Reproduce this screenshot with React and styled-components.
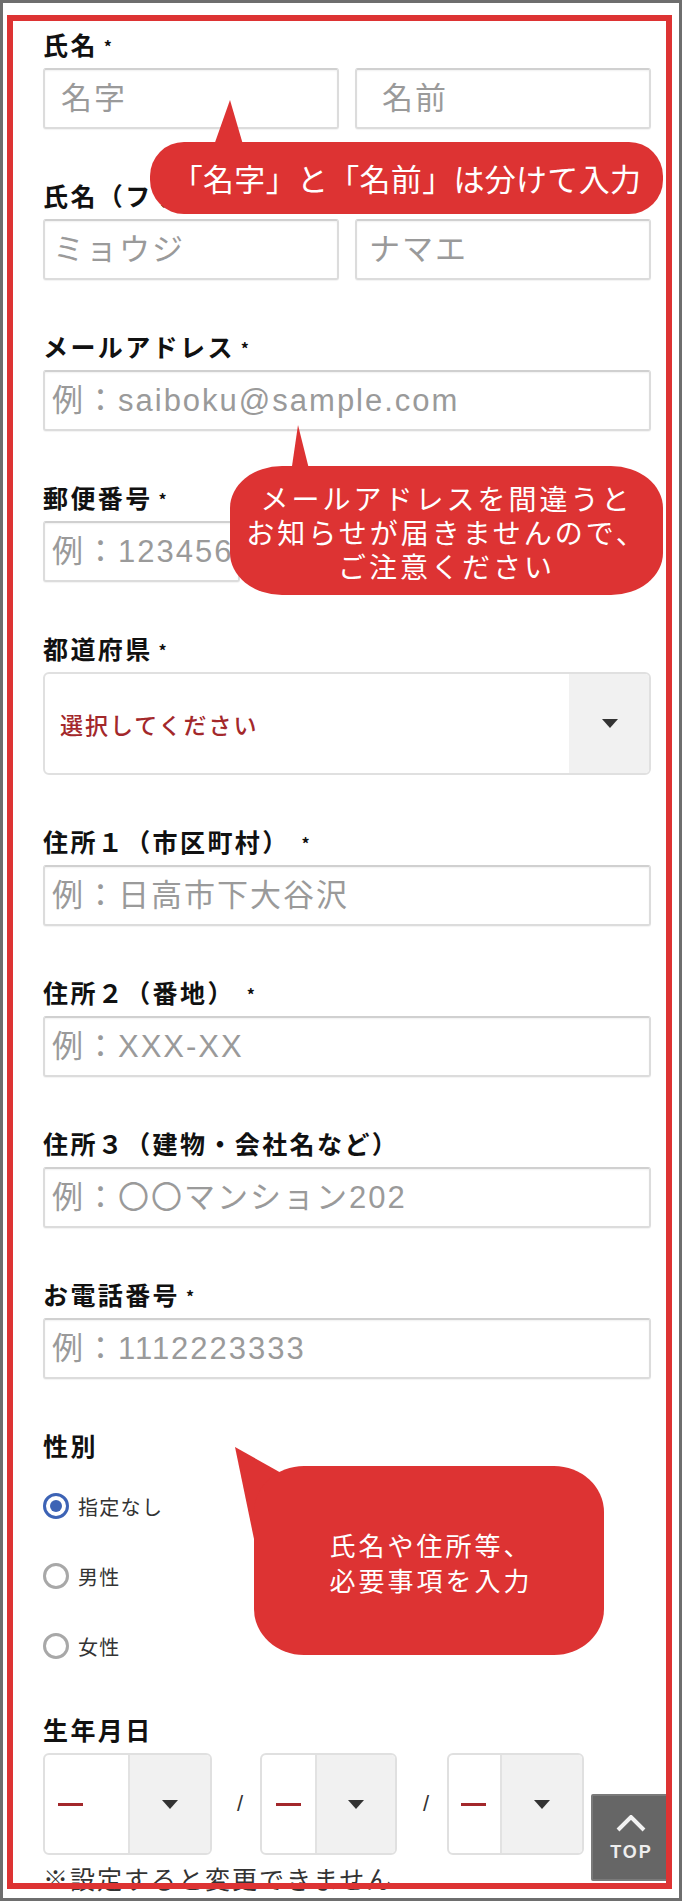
import React from "react";
import styled, { createGlobalStyle } from "styled-components";

const RED = "#dd3333";

const GlobalStyle = createGlobalStyle`
  html, body { margin: 0; padding: 0; background: #fff; }
  body { font-family: "Noto Sans CJK JP", "Liberation Sans", sans-serif; }
  *, *::before, *::after { box-sizing: border-box; }
`;

const Screen = styled.div`
  position: relative;
  width: 682px;
  height: 1901px;
  border: 3px solid #6e6e6e;
  background: #fff;
  overflow: hidden;
`;

const Form = styled.form`
  display: flex;
  flex-direction: column;
  padding: 26px 28px 0 40px;
`;

const Field = styled.div`
  display: flex;
  flex-direction: column;
  margin-bottom: ${(p) => p.$mb ?? 51}px;
`;

const Label = styled.div`
  font-family: "Noto Sans CJK JP", sans-serif;
  font-weight: 700;
  font-size: 25px;
  height: 30px;
  line-height: 30px;
  letter-spacing: 2.4px;
  color: #111;
  margin-bottom: ${(p) => p.$mb ?? 9}px;
  white-space: nowrap;
`;

const Req = styled.span`
  display: inline-block;
  font-size: 16px;
  line-height: 1;
  margin-left: ${(p) => p.$gap ?? 6}px;
  vertical-align: 2px;
`;

const Pair = styled.div`
  display: grid;
  grid-template-columns: 1fr 1fr;
  gap: 16px;
`;

const TextInput = styled.input`
  display: block;
  width: ${(p) => (p.$w ? `${p.$w}px` : "100%")};
  height: 61px;
  margin: 0;
  border: 2px solid #dcdcdc;
  border-top-color: #d0d0d0;
  border-radius: 3px;
  box-shadow: inset 0 1px 2px rgba(0, 0, 0, 0.06), 0 1px 1px rgba(0, 0, 0, 0.05);
  padding: 0 0 0 ${(p) => p.$pad ?? 7}px;
  font-family: "Liberation Sans", "Noto Sans CJK JP", sans-serif;
  font-size: 31px;
  letter-spacing: 2px;
  color: #333;
  background: #fff;
  outline: none;
  &::placeholder {
    color: #9a9a9a;
    opacity: 1;
  }
`;

const SelectBox = styled.div`
  display: flex;
  flex: none;
  height: ${(p) => p.$h}px;
  width: ${(p) => (p.$w ? `${p.$w}px` : "100%")};
  border: 2px solid #e0e0e0;
  border-radius: 6px;
  overflow: hidden;
  background: #fff;
`;

const SelectValue = styled.div`
  flex: 1;
  display: flex;
  align-items: center;
  padding-left: ${(p) => p.$pad}px;
  font-family: "Noto Sans CJK JP", sans-serif;
  font-weight: 500;
  font-size: 23px;
  letter-spacing: 2px;
  color: #a3282b;
  white-space: nowrap;
`;

const Dash = styled.span`
  display: block;
  width: 25px;
  height: 3px;
  background: #a3282b;
`;

const SelectButton = styled.div`
  flex: none;
  width: ${(p) => p.$w}px;
  background: #f1f1f1;
  border-left: 2px solid ${(p) => (p.$divider ? "#e2e2e2" : "#f1f1f1")};
  display: flex;
  align-items: center;
  justify-content: center;
`;

const Caret = () => (
  <svg width="16" height="9" viewBox="0 0 16 9">
    <polygon points="0,0 16,0 8,9" fill="#333" />
  </svg>
);

const RadioList = styled.div`
  display: flex;
  flex-direction: column;
`;

const RadioRow = styled.label`
  display: flex;
  align-items: center;
  gap: 9px;
  height: 70px;
  font-family: "Noto Sans CJK JP", sans-serif;
  font-size: 20px;
  letter-spacing: 1.3px;
  color: #333;
`;

const RadioMark = styled.span`
  flex: none;
  width: 26px;
  height: 26px;
  border-radius: 50%;
  border: 3px solid ${(p) => (p.$checked ? "#3d63b5" : "#a8a8a8")};
  display: flex;
  align-items: center;
  justify-content: center;
  &::after {
    content: "";
    width: 12px;
    height: 12px;
    border-radius: 50%;
    background: ${(p) => (p.$checked ? "#3d63b5" : "transparent")};
  }
`;

const DateRow = styled.div`
  display: flex;
  align-items: center;
`;

const Slash = styled.span`
  width: ${(p) => p.$w}px;
  padding-left: 8px;
  text-align: center;
  font-family: "Liberation Sans", sans-serif;
  font-size: 22px;
  color: #333;
`;

const Note = styled.div`
  margin-top: 8px;
  font-family: "Noto Sans CJK JP", sans-serif;
  font-size: 25px;
  line-height: 30px;
  letter-spacing: 2px;
  color: #333;
  white-space: nowrap;
`;

/* ---------- annotation overlays ---------- */

const Bubble = styled.div`
  position: absolute;
  z-index: 3;
  left: ${(p) => p.$x}px;
  top: ${(p) => p.$y}px;
  width: ${(p) => p.$w}px;
  height: ${(p) => p.$h}px;
  border-radius: ${(p) => p.$r};
  background: ${RED};
  color: #fff;
  display: flex;
  align-items: center;
  justify-content: center;
  text-align: ${(p) => p.$align ?? "center"};
  padding: ${(p) => p.$pad ?? "0"};
  font-family: "Noto Sans CJK JP", sans-serif;
  font-size: ${(p) => p.$fs}px;
  line-height: ${(p) => p.$lh ?? 1.2};
  letter-spacing: ${(p) => p.$ls}px;
  white-space: nowrap;
`;

const Tail = styled.svg`
  position: absolute;
  z-index: 3;
  left: ${(p) => p.$x}px;
  top: ${(p) => p.$y}px;
  overflow: visible;
`;

const Highlight = styled.div`
  position: absolute;
  z-index: 6;
  left: 4px;
  top: 12px;
  width: 665px;
  height: 1874px;
  border: 6px solid ${RED};
  pointer-events: none;
`;

const TopButton = styled.a`
  position: absolute;
  z-index: 5;
  left: 588px;
  top: 1791px;
  width: 79px;
  height: 87px;
  background: #666;
  border: 2px solid #7a7a7a;
  border-radius: 2px;
  display: flex;
  flex-direction: column;
  align-items: center;
  justify-content: flex-start;
  padding-top: 19px;
  color: #eee;
  text-decoration: none;
  font-family: "Liberation Sans", sans-serif;
  font-weight: 700;
  font-size: 18px;
  letter-spacing: 2px;
  line-height: 1;
`;

const TopLabel = styled.span`
  margin-top: 11px;
  padding-left: 2px;
`;

export default function App() {
  return (
    <>
      <GlobalStyle />
      <Screen>
        <Form>
          <Field>
            <Label>
              氏名<Req>*</Req>
            </Label>
            <Pair>
              <TextInput $pad={16} placeholder="名字" />
              <TextInput $pad={25} placeholder="名前" />
            </Pair>
          </Field>

          <Field>
            <Label>
              氏名（フリガナ）<Req>*</Req>
            </Label>
            <Pair>
              <TextInput $pad={8} placeholder="ミョウジ" />
              <TextInput $pad={12} placeholder="ナマエ" />
            </Pair>
          </Field>

          <Field>
            <Label>
              メールアドレス<Req>*</Req>
            </Label>
            <TextInput placeholder="例：saiboku@sample.com" />
          </Field>

          <Field>
            <Label>
              郵便番号<Req>*</Req>
            </Label>
            <TextInput $w={197} placeholder="例：1234567" />
          </Field>

          <Field>
            <Label>
              都道府県<Req>*</Req>
            </Label>
            <SelectBox $h={103}>
              <SelectValue $pad={15}>選択してください</SelectValue>
              <SelectButton $w={80}>
                <Caret />
              </SelectButton>
            </SelectBox>
          </Field>

          <Field>
            <Label>
              住所１（市区町村）<Req $gap={12}>*</Req>
            </Label>
            <TextInput placeholder="例：日高市下大谷沢" />
          </Field>

          <Field>
            <Label>
              住所２（番地）<Req $gap={12}>*</Req>
            </Label>
            <TextInput placeholder="例：XXX-XX" />
          </Field>

          <Field>
            <Label>住所３（建物・会社名など）</Label>
            <TextInput placeholder="例：〇〇マンション202" />
          </Field>

          <Field>
            <Label>
              お電話番号<Req>*</Req>
            </Label>
            <TextInput placeholder="例：1112223333" />
          </Field>

          <Field $mb={33}>
            <Label $mb={11}>性別</Label>
            <RadioList>
              <RadioRow>
                <RadioMark $checked />
                指定なし
              </RadioRow>
              <RadioRow>
                <RadioMark />
                男性
              </RadioRow>
              <RadioRow>
                <RadioMark />
                女性
              </RadioRow>
            </RadioList>
          </Field>

          <Field $mb={0}>
            <Label>生年月日</Label>
            <DateRow>
              <SelectBox $h={102} $w={169}>
                <SelectValue $pad={13}>
                  <Dash />
                </SelectValue>
                <SelectButton $w={82} $divider>
                  <Caret />
                </SelectButton>
              </SelectBox>
              <Slash $w={48}>/</Slash>
              <SelectBox $h={102} $w={137}>
                <SelectValue $pad={14}>
                  <Dash />
                </SelectValue>
                <SelectButton $w={80} $divider>
                  <Caret />
                </SelectButton>
              </SelectBox>
              <Slash $w={50}>/</Slash>
              <SelectBox $h={102} $w={137}>
                <SelectValue $pad={12}>
                  <Dash />
                </SelectValue>
                <SelectButton $w={82} $divider>
                  <Caret />
                </SelectButton>
              </SelectBox>
            </DateRow>
            <Note>※設定すると変更できません</Note>
          </Field>
        </Form>

        <Tail $x={210} $y={97} width="31" height="48">
          <polygon points="17,0 0,48 31,48" fill={RED} />
        </Tail>
        <Bubble $x={147} $y={139} $w={513} $h={72} $r="34px" $fs={31} $ls={0.3}>
          「名字」と「名前」は分けて入力
        </Bubble>

        <Tail $x={288} $y={422} width="19" height="48">
          <polygon points="7,0 0,48 19,48" fill={RED} />
        </Tail>
        <Bubble
          $x={227}
          $y={463}
          $w={433}
          $h={129}
          $r="52px / 42px"
          $fs={28}
          $ls={3}
          $lh="34px"
          $pad="2px 0 0 0"
        >
          メールアドレスを間違うと
          <br />
          お知らせが届きませんので、
          <br />
          ご注意ください
        </Bubble>

        <Tail $x={227} $y={1442} width="80" height="108">
          <polygon points="5,2 53,29 75,60 24,94" fill={RED} />
        </Tail>
        <Bubble
          $x={251}
          $y={1463}
          $w={350}
          $h={189}
          $r="50px / 46px"
          $fs={26}
          $ls={3}
          $lh="35px"
          $align="left"
          $pad="2px 0 0 4px"
        >
          氏名や住所等、
          <br />
          必要事項を入力
        </Bubble>

        <TopButton href="#top">
          <svg width="30" height="17" viewBox="0 0 30 17">
            <polyline
              points="2,15 15,2 28,15"
              fill="none"
              stroke="#f2f2f2"
              strokeWidth="4"
            />
          </svg>
          <TopLabel>TOP</TopLabel>
        </TopButton>

        <Highlight />
      </Screen>
    </>
  );
}
